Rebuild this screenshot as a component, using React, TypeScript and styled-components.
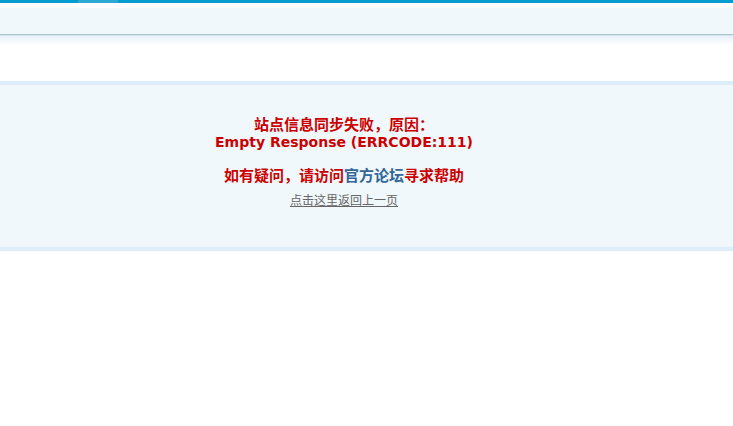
import { createGlobalStyle, styled } from "styled-components";

const GlobalStyle = createGlobalStyle`
  html, body {
    margin: 0;
    padding: 0;
    background: #fff;
  }

  body {
    font: 12px "Noto Sans CJK SC", "DejaVu Sans", sans-serif;
    color: #333;
  }
`

const TopBar = styled.div`
  height: 3px;
  background: #079ccf;
  padding-left: 78px;

  .current {
    display: block;
    width: 40px;
    height: 3px;
    background: #2ba9d5;
  }
`

const Header = styled.div`
  margin-top: 5px;
  height: 26px;
  background: #f0f8fb;
  border-bottom: 1px solid #aac6cd;
  box-shadow: 0 1px 0 #d6e5ea;
`

const Shade = styled.div`
  height: 9px;
  margin-top: 1px;
  background: linear-gradient(#e8f0fa, #ffffff);
`

const Main = styled.div`
  margin-top: 36px;
  border-top: 4px solid #deedfa;
  border-bottom: 4px solid #deedfa;
  background: #f0f8fb;
  height: 170px;
  box-sizing: border-box;
  padding: 30px 45px 0 0;
  text-align: center;
`

const Message = styled.p<{ $gap?: number }>`
  margin: ${({ $gap }) => $gap ?? 0}px 0 0;
  font-weight: bold;
  font-size: 15px;
  line-height: 17px;
  color: #cc0000;
  font-family: "Noto Sans CJK SC", sans-serif;

  .code {
    font-family: "DejaVu Sans", Verdana, sans-serif;
    font-size: 14px;
  }

  a {
    color: #336699;
    text-decoration: none;
  }
`

const BackLink = styled.a`
  display: inline-block;
  margin-top: 9px;
  font-size: 12px;
  line-height: 16px;
  color: #666;
  text-decoration: underline;
  font-family: "Noto Sans CJK SC", sans-serif;
`

export default function App() {
  return (
    <>
      <GlobalStyle />
      <TopBar>
        <span className="current" />
      </TopBar>
      <Header />
      <Shade />
      <Main>
        <Message>站点信息同步失败，原因：</Message>
        <Message><span className="code">Empty Response (ERRCODE:111)</span></Message>
        <Message $gap={15}>
          如有疑问，请访问<a href="#">官方论坛</a>寻求帮助
        </Message>
        <BackLink href="#">点击这里返回上一页</BackLink>
      </Main>
    </>
  )
}
